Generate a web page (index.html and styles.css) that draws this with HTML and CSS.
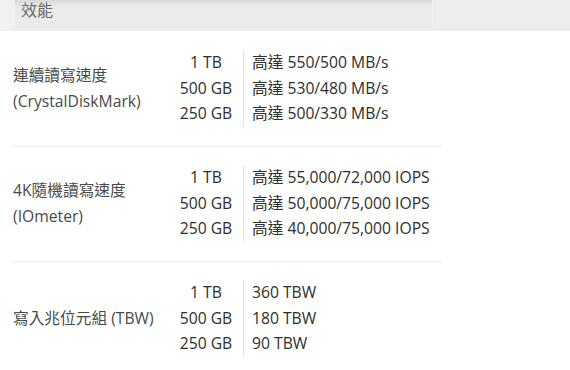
FILE: index.html
```html
<!DOCTYPE html>
<html lang="zh-Hant">
<head>
<meta charset="utf-8">
<link rel="stylesheet" href="styles.css">
</head>
<body>
<div class="header">
  <div class="header-left"></div>
  <div class="header-main">效能</div>
  <div class="header-right"></div>
</div>
<div class="specs">
  <div class="section first">
    <div class="label">連續讀寫速度<br>(CrystalDiskMark)</div>
    <div class="sizes"><div>1 TB</div><div>500 GB</div><div>250 GB</div></div>
    <div class="values"><div>高達 550/500 MB/s</div><div>高達 530/480 MB/s</div><div>高達 500/330 MB/s</div></div>
  </div>
  <div class="section">
    <div class="label">4K隨機讀寫速度<br>(IOmeter)</div>
    <div class="sizes"><div>1 TB</div><div>500 GB</div><div>250 GB</div></div>
    <div class="values"><div>高達 55,000/72,000 IOPS</div><div>高達 50,000/75,000 IOPS</div><div>高達 40,000/75,000 IOPS</div></div>
  </div>
  <div class="section">
    <div class="label">寫入兆位元組 (TBW)</div>
    <div class="sizes"><div>1 TB</div><div>500 GB</div><div>250 GB</div></div>
    <div class="values"><div>360 TBW</div><div>180 TBW</div><div>90 TBW</div></div>
  </div>
</div>
</body>
</html>
```

FILE: styles.css
```css
html, body {
  margin: 0;
  padding: 0;
  background: #ffffff;
}
body {
  font-family: "Open Sans", "Noto Sans CJK TC", sans-serif;
  font-size: 15.7px;
  color: #2e2e2e;
  width: 570px;
  height: 370px;
  overflow: hidden;
}
.header {
  display: flex;
  height: 31px;
}
.header-left {
  width: 15px;
  background: #f1f1f1;
}
.header-main {
  width: 417px;
  padding-left: 6px;
  box-sizing: border-box;
  background: linear-gradient(to bottom, #d9d9d9 0px, #e7e7e7 5px, #ebebeb 10px, #ebebeb 100%);
  color: #6a6a6a;
  line-height: 20px;
  font-size: 16px;
}
.header-right {
  flex: 1;
  background: #ededed;
  border-left: 1px solid #f3f3f3;
}
.specs {
  margin-left: 12px;
  width: 430px;
}
.section {
  display: flex;
  align-items: stretch;
  border-top: 1px solid #eeeeee;
  padding: 18px 0 19px;
  line-height: 25.67px;
}
.section.first {
  border-top: none;
  padding-top: 19px;
}
.label {
  width: 164px;
  padding-left: 1px;
  box-sizing: border-box;
  align-self: center;
  color: #4a4a4a;
}
.sizes {
  width: 60px;
  text-align: center;
}
.values {
  margin-left: 7px;
  border-left: 1px solid #e2e2e2;
  padding-left: 8px;
}
```
